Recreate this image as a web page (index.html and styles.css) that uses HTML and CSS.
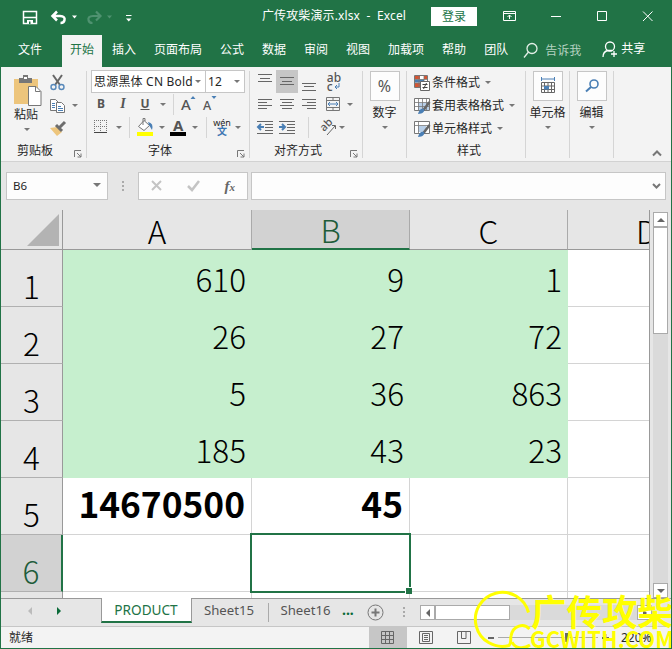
FILE: index.html
```html
<!DOCTYPE html>
<html lang="zh-CN">
<head>
<meta charset="utf-8">
<title>广传攻柴演示.xlsx - Excel</title>
<link rel="stylesheet" href="styles.css">
</head>
<body>
<div class="app">
  <header class="titlebar">
    <svg class="quick" width="260" height="34" fill="none" stroke="#fff">
      <path d="M23.500 11.500h13v12h-13zM24 17.500h12" stroke-width="1.500"/><path d="M27 20h6v4h-6z" fill="#fff" stroke="none"/><path d="M29 21.500h1.500V24H29z" fill="#217346" stroke="none"/>
      <path d="M57 11.500l-4.500 4.500 4.500 4.500M53 16h7c4 0 5 2 4.500 4-.3 2-2 3-4 3" stroke-width="2.500"/>
      <path d="M72 15.500h5l-2.500 3zM126 18.500h5.500l-2.750 3z" fill="#fff" stroke="none"/>
      <path d="M96 11.500l4.500 4.500-4.500 4.500M100 16h-7c-4 0-5 2-4.500 4 .3 2 2 3 4 3" stroke="#4f9270" stroke-width="2.200"/>
      <path d="M107 15.500h5l-2.500 3z" fill="#4f9270" stroke="none"/><path d="M126 15.500h5.500"/>
    </svg>
    <span class="doc">广传攻柴演示.xlsx&nbsp; -&nbsp; Excel</span>
    <button class="login">登录</button>
    <svg class="winctl" width="170" height="34" fill="none" stroke="#fff">
      <path d="M1.500 11.500h12v9h-12zM1.500 13.500h12M7.500 19v-4M5.500 17l2-2 2 2M49 16.500h10M95.500 11.500h9v9h-9zM141 11.500l9.500 9.500M150.500 11.500l-9.500 9.500"/>
    </svg>
  </header>
  <nav class="tabs">
    <a class="file">文件</a><a class="active">开始</a><a>插入</a><a>页面布局</a><a>公式</a><a>数据</a><a>审阅</a><a>视图</a><a>加载项</a><a>帮助</a><a>团队</a>
    <svg class="search" width="16" height="18" fill="none" stroke="#e3efe7" stroke-width="1.300"><circle cx="9" cy="6.500" r="5"/><path d="M5.500 10L1 15.500"/></svg>
    <span class="tell">告诉我</span>
    <svg class="person" width="17" height="18" fill="none" stroke="#fff" stroke-width="1.300"><circle cx="8" cy="5.500" r="4.500"/><path d="M1 16c0-4 2.500-6 5-6.500h4M9 13h6M12 10v6"/></svg>
    <span class="share">共享</span>
  </nav>

  <section class="ribbon">
    <div class="group g-clip">
      <div class="clip-body">
        <div class="paste">
          <svg width="30" height="32"><path d="M1 4h24v25H1z" fill="#edc57c"/><path d="M6 3h4V0h5v3h4v5H6z" fill="#777"/><path d="M11 2h3v2h-3z" fill="#fff"/><path d="M15.500 11.500h7.500l5 5v14H15.500z" fill="#fff" stroke="#777"/><path d="M22.500 11.500v5h5" fill="none" stroke="#777"/></svg>
          <span>粘贴</span><i class="dd"></i>
        </div>
        <div class="clip-tools">
          <div class="r"><svg width="18" height="18" fill="none"><path d="M4 1l7 10M13 1L6 11" stroke="#666" stroke-width="2"/><circle cx="4.500" cy="13" r="2.500" stroke="#5788ba" stroke-width="1.400"/><circle cx="12.500" cy="13" r="2.500" stroke="#5788ba" stroke-width="1.400"/></svg></div>
          <div class="r"><svg width="18" height="16" fill="#fff" stroke="#777"><path d="M1.500 1.500h5l3 3v8h-8z"/><path d="M7.500 4.500h5l3 3v7h-8z"/><path d="M3 5.500h3M3 7.500h3M3 9.500h3M9 8.500h3M9 10.500h5M9 12.500h5" stroke="#4a7fb5"/></svg><i class="dd"></i></div>
          <div class="r"><svg width="18" height="16"><path d="M1 7l7-1 5 5-5 4z" fill="#edc57c"/><path d="M7 4l6 6M10 7l6-6" stroke="#6d6d6d" stroke-width="3"/></svg></div>
        </div>
      </div>
      <footer><span>剪贴板</span><svg class="launch" width="8" height="8"><path d="M.5 7V.5H7M3 3l4 4M7 3.500V7H3.500" fill="none" stroke="#777"/></svg></footer>
    </div>

    <div class="group g-font">
      <div class="combos"><div class="combo name"><span>思源黑体 CN Bold</span><i class="dd"></i></div><div class="combo size"><span>12</span><i class="dd"></i></div></div>
      <div class="r row-style"><b>B</b><em>I</em><u>U</u><i class="dd"></i><i class="sep"></i>
        <svg width="16" height="16"><text x="0" y="14" class="glyph l">A</text><path d="M9.500 3l2.500-3 2.500 3z" fill="#4a7fb5"/></svg>
        <svg width="16" height="16"><text x="0" y="14" class="glyph s">A</text><path d="M8.500 0h5l-2.500 3z" fill="#4a7fb5"/></svg></div>
      <div class="r row-color">
        <svg width="14" height="14" fill="none" stroke="#777"><path d="M.5 0v12M6.500 0v12M12.500 0v12M0 .5h13M0 6.500h13" stroke-dasharray="1 1"/><path d="M0 12.500h13" stroke="#444"/></svg><i class="dd"></i><i class="sep"></i>
        <svg width="18" height="18"><path d="M8 2.500l5.500 5L8 12.500l-5.500-4z" fill="#fff" stroke="#777"/><path d="M7 7V.5h2V3" fill="none" stroke="#777"/><path d="M12 4q6 1 4 8l-3-5z" fill="#4a7fb5"/><path d="M1 14h16v4H1z" fill="#ff0"/></svg><i class="dd"></i>
        <svg width="18" height="18"><text x="4" y="12.500" class="glyph a">A</text><path d="M1 14h16v4H1z"/></svg><i class="dd"></i><i class="sep"></i>
        <span class="wen">wén<small>文</small></span><i class="dd"></i>
      </div>
      <footer><span>字体</span><svg class="launch" width="8" height="8"><path d="M.5 7V.5H7M3 3l4 4M7 3.500V7H3.500" fill="none" stroke="#777"/></svg></footer>
    </div>

    <div class="group g-align">
      <div class="r row-a">
        <svg width="16" height="22" stroke="#666"><path d="M1 3.500h14M3 7.500h10M1 10.500h14"/></svg>
        <svg class="on" width="22" height="23" stroke="#666"><path d="M4 7.500h14M6 11.500h10M4 14.500h14"/></svg>
        <svg width="16" height="22" stroke="#666"><path d="M1 12.500h14M3 15.500h10M1 19.500h14"/></svg>
        <span class="abc">ab<small>c<svg width="7" height="7" fill="none" stroke="#4a7fb5"><path d="M5 0v4H1M3 2L1 4l2 2"/></svg></small></span>
      </div>
      <div class="r row-b">
        <svg width="16" height="12" stroke="#666"><path d="M1 1.500h14M1 4.500h9M1 7.500h14M1 10.500h9"/></svg>
        <svg width="16" height="12" stroke="#666"><path d="M1 1.500h14M3 4.500h10M1 7.500h14M3 10.500h10"/></svg>
        <svg width="16" height="12" stroke="#666"><path d="M1 1.500h14M6 4.500h9M1 7.500h14M6 10.500h9"/></svg>
        <svg width="16" height="16" fill="none" stroke="#777"><path d="M1.500 1.500h13v13h-13zM1 4.500h14M1 11.500h14M8 1v3M8 11v4"/><path d="M3 8h10M5 6L3 8l2 2M11 6l2 2-2 2" stroke="#4a7fb5"/></svg><i class="dd"></i>
      </div>
      <div class="r row-c">
        <svg width="18" height="16" fill="none" stroke="#666"><path d="M1 2.500h16M9 5.500h8M9 8.500h8M9 11.500h8M1 14.500h16"/><path d="M2 8h6M5 5L2 8l3 3" stroke="#4a7fb5" stroke-width="2"/></svg>
        <svg width="18" height="16" fill="none" stroke="#666"><path d="M1 2.500h16M9 5.500h8M9 8.500h8M9 11.500h8M1 14.500h16"/><path d="M1 8h6M4 5l3 3-3 3" stroke="#4a7fb5" stroke-width="2"/></svg>
        <i class="sep"></i>
        <svg width="18" height="17"><text class="glyph r45" transform="translate(5 13) rotate(-45)">ab</text><path d="M8 16l8-9M13 6.500h3.500V10" fill="none" stroke="#666"/></svg><i class="dd"></i>
      </div>
      <footer><span>对齐方式</span><svg class="launch" width="8" height="8"><path d="M.5 7V.5H7M3 3l4 4M7 3.500V7H3.500" fill="none" stroke="#777"/></svg></footer>
    </div>

    <div class="group tall g-num"><div class="tile">%</div><span>数字</span><i class="dd"></i></div>

    <div class="group g-style">
      <div class="cmd"><svg width="18" height="18"><path d="M1.500 1.500h13v12h-13z" fill="#fff" stroke="#777"/><path d="M2 2h5v3H2zM2 9h5v4H2z" fill="#d65532"/><path d="M2 5.500h9v3H2z" fill="#4a7fb5"/><path d="M11 2h3v3h-3z" fill="#d65532"/><path d="M6 2v11M11 2v11M2 5.500h13M2 9h13" stroke="#777" stroke-width=".8"/><path d="M7.500 7.500h9v9h-9z" fill="#fff" stroke="#666"/><path d="M9.500 10.500h5M9.500 13.500h5M13.500 9l-3 6" stroke="#444"/></svg>条件格式<i class="dd"></i></div>
      <div class="cmd"><svg width="18" height="18"><path d="M1.500 1.500h15v12h-15z" fill="#fff" stroke="#777"/><path d="M5 6h11v7H5z" fill="#b8cfe8"/><path d="M5.500 2v12M9.500 2v12M13.500 2v12M1 5.500h15M1 9.500h15" stroke="#777" stroke-width=".8"/><path d="M16.500 5l-6 8" stroke="#666" stroke-width="2.500"/><path d="M5 17c1-4 3-6 6-5 1 2-1 5-6 5" fill="#4a7fb5"/></svg>套用表格格式<i class="dd"></i></div>
      <div class="cmd"><svg width="18" height="18"><path d="M1.500 1.500h15v12h-15z" fill="#fff" stroke="#777"/><path d="M5 6h8v6H5z" fill="#b8cfe8"/><path d="M5.500 2v12M1 5.500h15" stroke="#777" stroke-width=".8"/><path d="M16.500 5l-6 8" stroke="#666" stroke-width="2.500"/><path d="M5 17c1-4 3-6 6-5 1 2-1 5-6 5" fill="#4a7fb5"/></svg>单元格样式<i class="dd"></i></div>
      <footer><span>样式</span></footer>
    </div>

    <div class="group tall g-cell"><div class="tile"><svg width="18" height="18" fill="none" stroke="#666"><path d="M2.500 5.500h13v10h-13zM2 9h14M2 12.500h14M5.500 5v11M9 5v11M12.500 5v11"/><path d="M5 9h5v3.500H5z" fill="#4a7fb5" stroke="none"/><path d="M3 2h12M2.500 0v4M15.500 0v4" stroke="#4a7fb5"/></svg></div><span>单元格</span><i class="dd"></i></div>
    <div class="group tall g-edit"><div class="tile"><svg width="18" height="18" fill="none" stroke="#4a7fb5" stroke-width="1.600"><circle cx="11" cy="7" r="4"/><path d="M8 10l-5 4.500" stroke-width="2"/></svg></div><span>编辑</span><i class="dd"></i></div>
    <svg class="collapse" width="10" height="7" fill="none" stroke="#777" stroke-width="2"><path d="M1 5.500l4-4 4 4"/></svg>
  </section>

  <section class="formula">
    <div class="field ref"><span>B6</span><i class="dd big"></i></div>
    <i class="dots"></i>
    <div class="field fx"><svg width="14" height="12" fill="none" stroke="#c4c4c4" stroke-width="2"><path d="M2 1l9 9M11 1l-9 9"/></svg><svg width="16" height="12" fill="none" stroke="#c4c4c4" stroke-width="2.500"><path d="M2 6l4 4 7-9"/></svg><span><em>f</em><sub>x</sub></span></div>
    <div class="field input"><svg width="9" height="6" fill="none" stroke="#777" stroke-width="2"><path d="M1 1l3.500 3.500L8 1"/></svg></div>
  </section>

  <main class="work">
    <div class="sheet">
      <div class="corner"><svg width="34" height="34"><path d="M33 0v32H1z" fill="#b3b3b3"/></svg></div>
      <div class="col">A</div><div class="col sel">B</div><div class="col">C</div><div class="col d">D</div>
      <div class="row">1</div><div class="c g">610</div><div class="c g">9</div><div class="c g">1</div><div class="c"></div>
      <div class="row">2</div><div class="c g">26</div><div class="c g">27</div><div class="c g">72</div><div class="c"></div>
      <div class="row">3</div><div class="c g">5</div><div class="c g">36</div><div class="c g">863</div><div class="c"></div>
      <div class="row">4</div><div class="c g last">185</div><div class="c g last">43</div><div class="c g last">23</div><div class="c"></div>
      <div class="row">5</div><div class="c bold">14670500</div><div class="c bold">45</div><div class="c"></div><div class="c"></div>
      <div class="row sel">6</div><div class="c"></div><div class="c cursor"></div><div class="c"></div><div class="c"></div>
      <div class="row"></div><div class="c"></div><div class="c"></div><div class="c"></div><div class="c"></div>
    </div>
    <div class="vscroll"><div class="btn"><i class="up"></i></div><div class="thumb"></div><div class="btn end"><i class="down"></i></div></div>
  </main>

  <section class="sheetbar">
    <div class="arrows"><i class="left pale"></i><i class="right"></i></div>
    <div class="tab on">PRODUCT</div><div class="tab t15">Sheet15</div><div class="tab t16">Sheet16</div>
    <span class="more">...</span>
    <svg class="plus" width="17" height="17" fill="none" stroke="#777"><circle cx="8.500" cy="8.500" r="7.500"/><path d="M4.500 8.500h8M8.500 4.500v8" stroke-width="2"/></svg>
    <i class="dots"></i>
    <div class="hscroll"><div class="btn"><i class="left"></i></div><div class="thumb"></div><div class="btn end"><i class="right gray"></i></div></div>
  </section>

  <footer class="status">
    <span class="ready">就绪</span>
    <div class="view on"><svg width="14" height="14" fill="none" stroke="#666"><path d="M.5.5h12v12H.5zM4.500 0v13M8.500 0v13M0 4.500h13M0 8.500h13"/></svg></div>
    <div class="view"><svg width="14" height="14" fill="none" stroke="#666"><path d="M.5.5h13v12H.5zM3.500 2.500h7v8h-7zM5 4.500h4M5 6.500h4M5 8.500h4"/></svg></div>
    <div class="view"><svg width="15" height="14" fill="none" stroke="#666"><path d="M.5.500h13v12H.5zM4.500 0v7.500H9M9 0v7.500"/></svg></div>
    <div class="zoom"><b class="minus"></b><i class="track"></i><svg width="8" height="8" stroke="#666" stroke-width="2"><path d="M0 4h7M3.500 0v7"/></svg><span>220%</span></div>
  </footer>

  <svg class="mark" width="202" height="58">
    <g fill="none" stroke="#ff0" stroke-width="3"><path d="M56.500 20.500A27 27 0 1 0 37 53.500C40 50 38 48 39 44C41 33 52 31 57.500 37M40 50C43 57 52 57 58 53"/></g>
    <text class="cn" x="59" y="33.500" textLength="142" lengthAdjust="spacingAndGlyphs">广传攻柴</text>
    <text class="en" x="58" y="56" textLength="144" lengthAdjust="spacingAndGlyphs">GCWITH.COM</text>
  </svg>
</div>
</body>
</html>
```

FILE: styles.css
```css
* { box-sizing: border-box; }
body { margin: 0; font: 12px/16px "Noto Sans", "Noto Sans CJK SC", sans-serif; color: #262626; }
svg { display: block; flex: none; overflow: visible; }
i { font-style: normal; }
.app { position: relative; width: 672px; height: 649px; overflow: hidden; display: flex; flex-direction: column; background: #e6e6e6; border: solid #217346; border-width: 0 1px 1px; }

.titlebar { height: 35px; flex: none; display: flex; background: #217346; color: #fff; margin: 0 -1px; }
.doc { width: 171px; margin-top: 8px; white-space: nowrap; padding-left: 2px; letter-spacing: .12px; }
.login { width: 46px; height: 19px; margin-top: 7px; padding: 0; border: 0; background: #fff; color: #217346; font: inherit; line-height: 18px; }
.winctl { margin-left: 25px; }

.tabs { height: 32px; flex: none; display: flex; background: #217346; color: #fff; margin: 0 -1px; line-height: 30px; white-space: nowrap; }
.tabs a { padding: 0 9px; }
.tabs .file { width: 62px; padding-left: 18px; }
.tabs .active { width: 40px; padding: 0; text-align: center; background: #f3f3f3; color: #217346; margin-right: 1px; }
.search { margin: 7px 6px 0 6px; }
.tell { color: #b5d2c1; line-height: 31px; }
.person { margin: 6px 2px 0 21px; }
.share { line-height: 28px; }

.ribbon { height: 95px; flex: none; display: flex; background: #f3f3f3; border-bottom: 1px solid #d2d2d2; padding-top: 4px; }
.group { height: 87px; border-right: 1px solid #d5d5d5; display: flex; flex-direction: column; flex: none; }
.group footer { height: 15px; margin-top: auto; display: flex; justify-content: center; position: relative; }
.launch { position: absolute; right: 4px; top: 7px; }
.dd { width: 0; height: 0; border: solid transparent; border-width: 3px 3px 0; border-top-color: #777; flex: none; justify-self: center; }
.sep { width: 1px; height: 21px; background: #d5d5d5; }
.r { display: grid; align-items: center; justify-items: center; height: 22px; }

.g-clip { width: 86px; }
.clip-body { display: flex; }
.paste { width: 48px; padding: 4px 0 0 4px; display: flex; flex-direction: column; align-items: center; }
.paste svg { margin-left: 2px; }
.paste span { margin-right: 2px; }
.paste .dd { margin-top: 5px; }
.clip-tools .r { grid-template-columns: 18px 15px; height: 23px; }
.g-clip footer { padding-right: 17px; }

.g-font { width: 163px; padding-left: 4px; }
.combos { display: flex; height: 22px; margin-top: -1px; }
.combo { border: 1px solid #c6c6c6; background: #fff; display: flex; align-items: center; padding: 0 4px 0 2px; height: 23px; }
.combo span { overflow: hidden; white-space: nowrap; flex: 1; letter-spacing: .2px; }
.combo.name { width: 115px; }
.combo.size { width: 40px; margin-left: -1px; }
.row-style { grid-template-columns: 20px 24px 20px 16px 4px 28px 16px; height: 24px; color: #555; justify-content: start; }
.row-style em { font-family: "Liberation Serif", serif; font-weight: bold; font-size: 14px; }
.row-style u { font-weight: bold; }
.row-color { grid-template-columns: 20px 16px 4px 28px 6px 26px 8px 14px 18px 14px; justify-content: start; }
.glyph { font-family: "Noto Sans", sans-serif; font-weight: 500; fill: #555; }
.glyph.l { font-size: 15px; } .glyph.s { font-size: 12.5px; } .glyph.a { font-size: 15px; font-weight: 700; } .glyph.r45 { font-size: 11px; }
.wen { font-size: 9px; line-height: 9px; text-align: center; }
.wen small { display: block; font-size: 10px; color: #3d77b3; font-weight: bold; line-height: 9px; }
.g-font footer { padding-right: 20px; }

.g-align { width: 113px; padding-left: 4px; }
.row-a { grid-template-columns: 22px 22px 22px 28px; justify-content: start; margin-top: -1px; }
.row-a .on { background: #c6c6c6; }
.row-b { grid-template-columns: 22px 22px 22px 26px 8px; justify-content: start; height: 24px; }
.row-c { grid-template-columns: 22px 22px 20px 20px 8px; justify-content: start; }
.abc { color: #555; line-height: 9px; font-size: 12px; font-weight: 500; }
.abc small { display: flex; align-items: center; font-size: 12px; gap: 1px; }
.g-align footer { padding-right: 20px; }

.tall { align-items: center; white-space: nowrap; }
.tall span { margin-top: 4px; }
.tall .dd { margin-top: 5px; }
.tile { width: 30px; height: 30px; border: 1px solid #c6c6c6; background: #fdfdfd; display: flex; align-items: center; justify-content: center; font-size: 16px; color: #555; }
.g-num { width: 44px; }
.g-style { width: 119px; padding-left: 6px; }
.cmd { display: flex; align-items: center; height: 23px; gap: 1px; white-space: nowrap; }
.cmd .dd { margin-left: 4px; }
.g-cell, .g-edit { width: 44px; }
.collapse { margin: 79px 0 0 38px; }

.formula { height: 48px; flex: none; display: flex; padding: 10px 5px 0; }
.field { height: 28px; border: 1px solid #c6c6c6; background: #fdfdfd; display: flex; align-items: center; }
.ref { width: 102px; padding: 0 6px; justify-content: space-between; font-size: 11.5px; }
.dd.big { border-width: 4px 4px 0; margin-bottom: 3px; }
.dots { width: 2px; height: 10px; background: repeating-linear-gradient(#aaa 0 2px, transparent 2px 4px); }
.formula .dots { margin: 9px 14px 0 14px; }
.fx { width: 110px; padding: 0 12px 0 11px; justify-content: space-between; color: #666; }
.fx span { font: bold italic 15px "Liberation Serif", serif; }
.fx sub { font-size: 11px; vertical-align: baseline; }
.input { margin-left: 3px; flex: 1; justify-content: flex-end; padding-right: 4px; }

.work { height: 388px; flex: none; display: flex; }
.sheet { width: 649px; height: 388px; overflow: hidden; display: grid; grid-template-columns: 62px 189px 158px 158px 82px; grid-template-rows: 40px repeat(7, 57px); border-right: 1px solid #999; font: 300 31.5px/1 "Noto Sans CJK SC", sans-serif; color: #000; }
.corner { border: solid #999; border-width: 0 1px 1px 0; display: flex; justify-content: flex-end; padding: 4px 2px 0 0; }
.col { border: solid #aaa; border-width: 0 1px 1px 0; border-bottom-color: #999; display: flex; align-items: center; justify-content: center; padding-top: 2px; }
.col.sel { background: #d2d2d2; color: #1e5c3a; border-bottom: 2px solid #217346; }
.col.d { justify-content: flex-start; padding-left: 68px; overflow: hidden; border-right: 0; width: 81px; }
.row { border: solid #999; border-width: 0 1px 1px 0; border-bottom-color: #b0b0b0; display: flex; align-items: center; justify-content: center; padding-top: 16px; }
.row.sel { background: #d2d2d2; color: #1e5c3a; border-right: 2px solid #217346; }
.c { background: #fff; border: solid #d4d4d4; border-width: 0 1px 1px 0; display: flex; align-items: center; justify-content: flex-end; padding: 1px 5px 0 0; }
.c.g { background: #c6efce; border-color: #c6efce; }
.bold { font-weight: 700; font-size: 35.3px; padding: 0 6px 6px 0; }
.cursor { position: relative; }
.cursor::before { content: ""; position: absolute; inset: -2px; border: 2px solid #217346; }
.cursor::after { content: ""; position: absolute; right: -3px; bottom: -3px; width: 6px; height: 6px; background: #217346; border: solid #fff; border-width: 1px 0 0 1px; }
.vscroll { width: 15px; margin: 2px 0 0 3px; display: flex; flex-direction: column; background: #dadada; }
.btn { background: #fff; border: 1px solid #aaa; width: 15px; height: 15px; display: flex; align-items: center; justify-content: center; flex: none; }
.vscroll .thumb { height: 107px; border: 1px solid #aaa; background: #fff; }
.vscroll .end { margin-top: auto; }
.up, .down, .left, .right { width: 0; height: 0; border: 4px solid transparent; }
.up { border-bottom-color: #666; border-top: 0; }
.down { border-top-color: #666; border-bottom: 0; }
.left { border-right-color: #666; border-left: 0; }
.right { border-left-color: #0b6b39; border-right: 0; }
.left.pale { border-right-color: #bbb; }
.right.gray { border-left-color: #666; }

.sheetbar { height: 29px; flex: none; border-top: 1px solid #999; border-bottom: 1px solid #c6c6c6; display: flex; }
.arrows { width: 100px; display: flex; gap: 25px; padding: 8px 0 0 27px; }
.tab { height: 25px; font-size: 13.2px; line-height: 22px; color: #555; text-align: center; }
.tab.on { width: 91px; background: #fff; color: #217346; border: solid #999; border-width: 0 1px 2px; border-bottom-color: #217346; margin-top: -1px; height: 25px; line-height: 23px; font-size: 13.6px; padding-right: 1px; }
.t15 { width: 76px; padding-right: 2px; }
.t16 { width: 77px; padding-right: 2px; background: linear-gradient(#aaa, #aaa) 0 4px / 1px 19px no-repeat; }
.more { color: #0b6b39; font-weight: bold; font-size: 14px; line-height: 22px; margin-left: -3px; width: 25px; }
.plus { margin-top: 5px; }
.sheetbar .dots { margin: 8px 0 0 19px; }
.hscroll { margin: 6px 0 0 15px; width: 232px; height: 15px; display: flex; background: #dadada; }
.hscroll .thumb { width: 75px; height: 15px; background: #fff; border: 1px solid #aaa; }
.hscroll .end { margin-left: auto; }

.status { flex: 1; background: #f3f3f3; display: flex; align-items: center; }
.ready { width: 368px; padding-left: 8px; }
.view { width: 38px; align-self: stretch; display: flex; align-items: center; justify-content: center; }
.view.on { background: #c6c6c6; }
.zoom { display: flex; align-items: center; margin-left: 5px; }
.minus { width: 6px; height: 2px; background: #666; }
.track { width: 100px; height: 9px; margin: 0 4px; background: linear-gradient(#666, #666) 67px 0 / 3px 9px no-repeat, linear-gradient(#aaa, #aaa) 0 4px / 100% 1px no-repeat; }
.zoom span { margin-left: 11px; }

.mark { position: absolute; left: 471px; top: 592px; }
.mark text { fill: #ff0; font-family: "Noto Sans CJK SC", sans-serif; }
.mark .cn { font-size: 36px; font-weight: 700; }
.mark .en { font-size: 22.5px; font-weight: 700; }
```
